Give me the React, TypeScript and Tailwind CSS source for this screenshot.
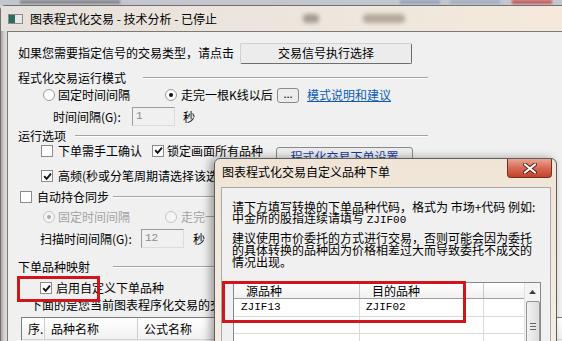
import React from 'react';

const cjk = "font-['Noto_Sans_CJK_SC','Noto_Sans',sans-serif]";
const mono = "font-['Liberation_Mono',monospace]";

function Check({ on }: { on?: boolean }) {
  return (
    <span className="flex h-[12px] w-[12px] shrink-0 items-center justify-center border border-[#8b8b8b] bg-white">
      {on && (
        <svg width="9" height="9" viewBox="0 0 9 9">
          <path d="M1.2 4.2 L3.6 6.8 L8 1.6" stroke="#111" strokeWidth="1.9" fill="none" />
        </svg>
      )}
    </span>
  );
}

function Radio({ on, dim }: { on?: boolean; dim?: boolean }) {
  return (
    <span
      className={`flex h-[12px] w-[12px] shrink-0 items-center justify-center rounded-full border ${
        dim ? 'border-[#c4c4c4] bg-[#f4f4f4]' : 'border-[#9a9a9a] bg-white'
      }`}
    >
      {on && <span className={`h-[4px] w-[4px] rounded-full ${dim ? 'bg-[#a8a8a8]' : 'bg-[#111]'}`} />}
    </span>
  );
}

function GroupLine({ w }: { w: string }) {
  return <div className={`h-[2px] border-t border-t-[#a3a3a3] border-b border-b-white ${w}`} />;
}

function Field({ value, w }: { value: string; w: string }) {
  return (
    <div
      className={`flex h-[19px] items-center border border-t-[#9c9c9c] border-l-[#9c9c9c] border-r-[#dcdcdc] border-b-[#dcdcdc] bg-[#f0f0f0] pl-[3px] text-[11px] text-[#8a8a8a] ${mono} ${w}`}
    >
      {value}
    </div>
  );
}

export default function App() {
  return (
    <div className={`relative h-[341px] w-[562px] overflow-hidden bg-[#d8d2cc] text-[12px] leading-none text-black ${cjk}`}>
      {/* blurred desktop strip behind the window */}
      <div className="flex h-[5px] items-start bg-[#c3c6cc]">
        <div className="ml-[20px] h-[4px] w-[100px] bg-[#8a8a8f] blur-[1px]" />
        <div className="ml-[280px] h-[4px] w-[40px] bg-[#9aa6b8] blur-[1px]" />
        <div className="ml-[10px] h-[4px] w-[50px] bg-[#a5b0c2] blur-[1px]" />
        <div className="ml-[12px] h-[4px] w-[40px] bg-[#c46060] blur-[1px]" />
      </div>

      {/* main window */}
      <div className="w-[640px] rounded-tl-[5px] border-l border-t border-[#707070]">
        <div className="flex h-[25px] items-center bg-linear-to-r from-[#e6e1dc] via-[#eee6dd] to-[#f6eadb] pl-[7px]">
          <span className="flex h-[10px] w-[15px] items-stretch border border-[#8c8c8c] bg-[#e8e8e8]">
            <span className="w-[6px] bg-[#2f6b63]" />
          </span>
          <span className="ml-[7px] whitespace-nowrap">图表程式化交易 - 技术分析 - 已停止</span>
          <span className="ml-[86px] h-[9px] w-[16px] rounded bg-[#a59a90] blur-[2px]" />
          <span className="ml-[44px] h-[9px] w-[42px] rounded bg-[#b3a89c] blur-[2px]" />
        </div>
        <div className="flex">
          <div className="w-[6px] bg-linear-to-r from-[#a8a0aa] via-[#d6d0ca] to-[#e2dcd6]" />
          <div className="flex h-[320px] flex-1 flex-col border-l border-t border-[#7a7a7a] bg-[#f0f0f0] pl-[10px]">
            <div className="mt-[10px] flex h-[22px] items-center">
              <span className="w-[222px] whitespace-nowrap">如果您需要指定信号的交易类型，请点击</span>
              <div className="flex h-[21px] w-[172px] items-center justify-center rounded-[2px] border border-t-[#d0d0d0] border-l-[#d0d0d0] border-r-[#6e6e6e] border-b-[#6e6e6e] bg-[#ececec]">
                交易信号执行选择
              </div>
            </div>

            <div className="mt-[7px] flex h-[14px] items-center">
              <span className="w-[125px] whitespace-nowrap">程式化交易运行模式</span>
              <GroupLine w="w-[285px]" />
            </div>

            <div className="mt-[2px] flex h-[16px] items-center">
              <span className="ml-[25px]"><Radio /></span>
              <span className="ml-[3px] w-[107px] whitespace-nowrap">固定时间间隔</span>
              <Radio on />
              <span className="ml-[4px] w-[96px] whitespace-nowrap">走完一根K线以后</span>
              <div className="flex h-[15px] w-[22px] items-center justify-center rounded-[3px] border border-[#8a8a8a] bg-[#ececec] pb-[4px] text-[11px]">
                ...
              </div>
              <span className="ml-[8px] text-[#0c5cb5] underline">模式说明和建议</span>
            </div>

            <div className="mt-[4px] flex h-[19px] items-center">
              <span className="ml-[35px] w-[79px] whitespace-nowrap">时间间隔(G):</span>
              <Field value="1" w="w-[43px]" />
              <span className="ml-[8px]">秒</span>
            </div>

            <div className="mt-[3px] flex h-[14px] items-center">
              <span className="w-[57px] whitespace-nowrap">运行选项</span>
              <GroupLine w="w-[353px]" />
            </div>

            <div className="flex h-[15px] items-center">
              <span className="ml-[23px]"><Check /></span>
              <span className="ml-[5px] w-[94px] whitespace-nowrap">下单需手工确认</span>
              <Check on />
              <span className="ml-[3px] w-[109px] whitespace-nowrap">锁定画面所有品种</span>
              <div className="mt-[4px] flex h-[20px] w-[137px] shrink-0 self-start items-center justify-center rounded-[3px] border border-[#8a8a8a] bg-[#ececec] text-[#1b3d9e]">
                程式化交易下单设置
              </div>
            </div>

            <div className="mt-[10px] flex h-[16px] items-center">
              <span className="ml-[23px]"><Check on /></span>
              <span className="ml-[5px] whitespace-nowrap">高频(秒或分笔周期请选择该选项)</span>
            </div>

            <div className="mt-[6px] flex h-[14px] items-center">
              <span className="ml-[2px]"><Check /></span>
              <span className="ml-[5px] w-[76px] whitespace-nowrap">自动持仓同步</span>
              <GroupLine w="w-[315px]" />
            </div>

            <div className="mt-[6px] flex h-[14px] items-center text-[#a3a3a3]">
              <span className="ml-[25px]"><Radio on dim /></span>
              <span className="ml-[3px] w-[107px] whitespace-nowrap">固定时间间隔</span>
              <Radio dim />
              <span className="ml-[4px] whitespace-nowrap">走完一根K线以后</span>
            </div>

            <div className="mt-[5px] flex h-[19px] items-center">
              <span className="ml-[22px] w-[101px] whitespace-nowrap">扫描时间间隔(G):</span>
              <Field value="12" w="w-[43px]" />
              <span className="ml-[9px]">秒</span>
            </div>

            <div className="mt-[12px] flex h-[14px] items-center">
              <span className="w-[95px] whitespace-nowrap">下单品种映射</span>
              <GroupLine w="w-[315px]" />
            </div>

            <div className="relative mt-[7px] flex h-[14px] items-center">
              <span className="ml-[22px]"><Check on /></span>
              <span className="ml-[4px] whitespace-nowrap">启用自定义下单品种</span>
              <span className="absolute left-[-1px] top-[-5px] z-10 h-[26px] w-[83px] border-[3px] border-[#d0161c]" />
            </div>

            <div className="mt-[3px] flex h-[14px] items-center">
              <span className="ml-[12px] whitespace-nowrap">下面的是您当前图表程序化交易的交易品种</span>
            </div>

            <div className="ml-[3px] mt-[5px] border-l border-t border-[#7d7d7d] bg-white">
              <div className="flex h-[22px] items-center border-b border-[#d5d5d5] bg-linear-to-b from-white to-[#f1f1f1]">
                <span className="flex h-full w-[23px] items-center border-r border-[#cfcfcf] pl-[6px]">序.</span>
                <span className="flex h-full w-[93px] items-center border-r border-[#cfcfcf] pl-[6px]">品种名称</span>
                <span className="flex h-full w-[120px] items-center pl-[6px]">公式名称</span>
              </div>
            </div>
          </div>
        </div>
      </div>

      {/* custom symbol dialog, floating over the main window */}
      <div className="absolute left-[214px] top-[158px] z-20 h-[200px] w-[343px] rounded-t-[6px] border border-[#5e5e5e] bg-linear-to-b from-[#f0e4d6] to-[#f5ede4] shadow-[-4px_0_8px_rgba(0,0,0,0.35)]">
        <div className="flex h-[28px] items-start">
          <span className="ml-[7px] mt-[7px] whitespace-nowrap">图表程式化交易自定义品种下单</span>
          <div className="ml-auto mr-[4px] flex h-[19px] w-[45px] items-center justify-center rounded-b-[4px] border border-t-0 border-[#7b2c22] bg-linear-to-b from-[#e9a493] via-[#d76a55] to-[#c2412b]">
            <svg width="14" height="11" viewBox="0 0 14 11">
              <path d="M2 1.5 L12 9.5 M12 1.5 L2 9.5" stroke="#5a2018" strokeWidth="4" strokeLinecap="round" />
              <path d="M2 1.5 L12 9.5 M12 1.5 L2 9.5" stroke="#fff" strokeWidth="2.2" strokeLinecap="round" />
            </svg>
          </div>
        </div>
        <div className="ml-[6px] h-[160px] w-[330px] border border-[#a9a9a9] bg-[#f0f0f0] pl-[10px]">
          <p className="mt-[13px] leading-[11px]">
            请下方填写转换的下单品种代码，格式为 市场+代码 例如:
            <br />
            中金所的股指连续请填写 <span className={`${mono} text-[11px]`}>ZJIF00</span>
          </p>
          <p className="mt-[6px] leading-[12px]">
            建议使用市价委托的方式进行交易，否则可能会因为委托
            <br />
            的具体转换的品种因为价格相差过大而导致委托不成交的
            <br />
            情况出现。
          </p>
          <div className="relative ml-[1px] mt-[14px] flex h-[70px] w-[308px] border border-[#828790] bg-white">
            <div className="flex w-[290px] flex-col">
              <div className="flex h-[17px] border-b border-[#a0a0a0] bg-linear-to-b from-white to-[#f0f0f0]">
                <span className="flex w-[126px] items-center border-r border-[#c9c9c9] pl-[12px]">源品种</span>
                <span className="flex w-[124px] items-center border-r border-[#c9c9c9] pl-[12px]">目的品种</span>
                <span className="flex-1" />
              </div>
              {[
                ['ZJIF13', 'ZJIF02'],
                ['', ''],
                ['', ''],
              ].map(([a, b], i) => (
                <div key={i} className={`flex h-[18px] border-b border-[#dadada] text-[11px] ${mono}`}>
                  <span className="flex w-[126px] items-center border-r border-[#dadada] pl-[7px]">{a}</span>
                  <span className="flex w-[124px] items-center border-r border-[#dadada] pl-[6px]">{b}</span>
                  <span className="flex-1" />
                </div>
              ))}
            </div>
            <div className="flex w-[16px] flex-col items-center border-l border-[#e2e2e2] bg-[#f4f4f4]">
              <div className="flex h-[17px] items-center justify-center">
                <svg width="7" height="4" viewBox="0 0 7 4">
                  <path d="M0 4 L3.5 0 L7 4 Z" fill="#3c3c3c" />
                </svg>
              </div>
              <div className="mt-[1px] flex h-[50px] w-[14px] flex-col items-center justify-center gap-[2px] rounded-[2px] border border-[#959595] bg-linear-to-r from-[#f2f2f2] to-[#dcdcdc]">
                <span className="h-px w-[6px] bg-[#666]" />
                <span className="h-px w-[6px] bg-[#666]" />
                <span className="h-px w-[6px] bg-[#666]" />
              </div>
            </div>
            <span className="absolute left-[-12px] top-[-2px] h-[42px] w-[244px] border-[3px] border-[#d0161c]" />
          </div>
        </div>
      </div>
    </div>
  );
}
